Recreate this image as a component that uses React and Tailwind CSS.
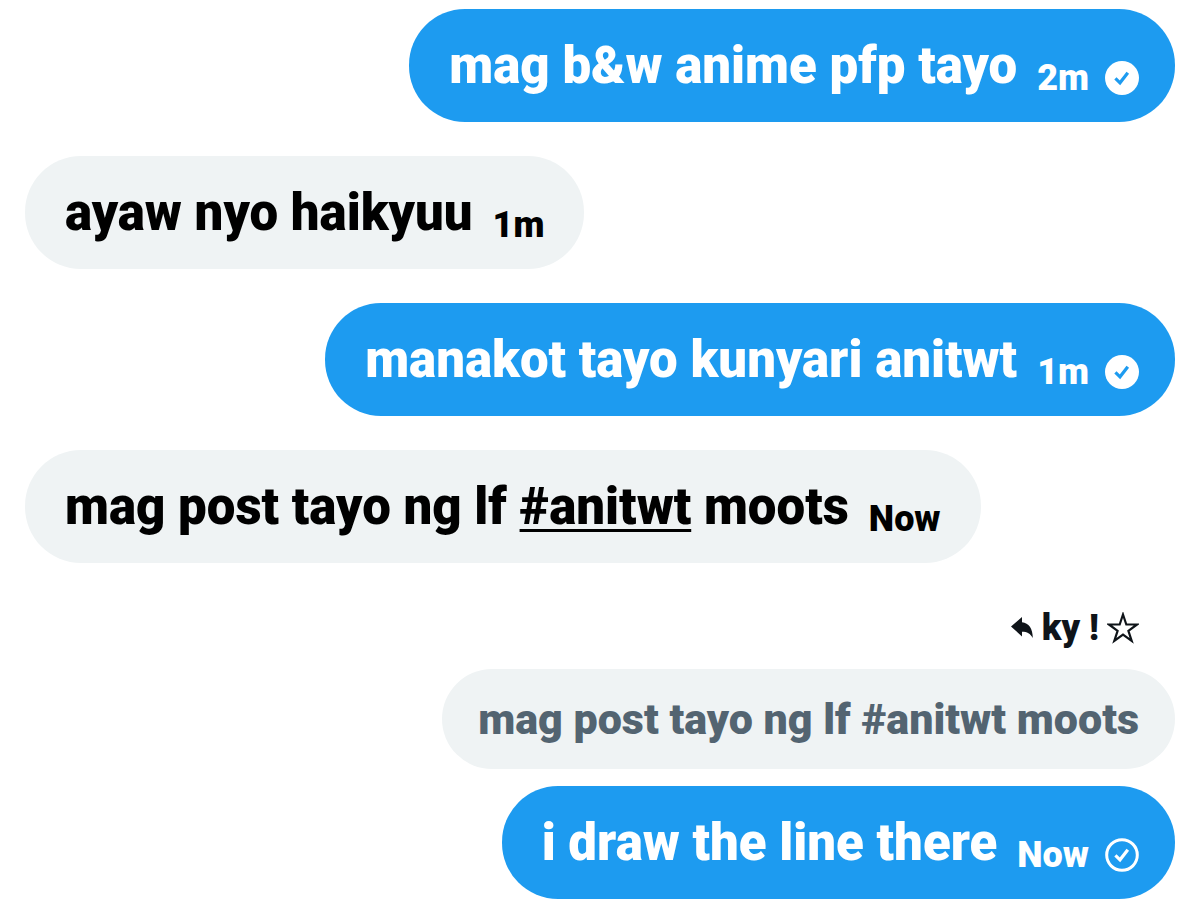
const messages = [
  { id: 1, mine: true, text: 'mag b&w anime pfp tayo', time: '2m', status: 'read' },
  { id: 2, mine: false, text: 'ayaw nyo haikyuu', time: '1m' },
  { id: 3, mine: true, text: 'manakot tayo kunyari anitwt', time: '1m', status: 'read' },
  { id: 4, mine: false, text: 'mag post tayo ng lf #anitwt moots', time: 'Now' },
  {
    id: 5,
    mine: true,
    text: 'i draw the line there',
    time: 'Now',
    status: 'sent',
    reply: { author: 'ky !', text: 'mag post tayo ng lf #anitwt moots' },
  },
];

function StatusIcon({ status }) {
  const read = status === 'read';
  return (
    <svg viewBox="0 0 34 34" className="size-[34px] shrink-0" fill="none" role="img" aria-label={status}>
      {read ? (
        <circle cx="17" cy="17" r="17" fill="white" />
      ) : (
        <circle cx="17" cy="17" r="15.3" stroke="white" strokeWidth="3" />
      )}
      <path d="M10.4 17.4l4.6 4.4 7.8-10" stroke={read ? '#1d9bf0' : 'white'} strokeWidth="3.2" />
    </svg>
  );
}

// turns #hashtags into links
function MessageText({ text }) {
  return text.split(/(#\w+)/).map((part, i) =>
    part.startsWith('#') ? (
      <a key={i} href={'#' + part.slice(1)} className="underline decoration-3 underline-offset-5 [text-decoration-skip-ink:none]">
        {part}
      </a>
    ) : (
      part
    )
  );
}

function ReplyPreview({ author, text }) {
  return (
    <>
      <div className="flex items-center gap-2 pr-9 pt-1.5 mb-4 text-[#0f1419]">
        <svg viewBox="0 0 24 24" className="w-6 h-6" fill="currentColor" aria-hidden="true">
          <path d="M1 10.5L12 1v5.2c6.8.6 10.8 6.3 10.8 15.8-2.4-4.4-5.6-6.3-10.8-6.3v4.8z" />
        </svg>
        <span className="text-[36px] leading-[50px]">{author}</span>
        <svg viewBox="0 0 32 32" className="w-8 h-8" fill="none" stroke="currentColor" strokeWidth="2.2" aria-hidden="true">
          <path d="M16 2.5l3.3 10h10.7l-8.6 6.3 3.3 10.2-8.7-6.3-8.7 6.3 3.3-10.2-8.6-6.3h10.7z" />
        </svg>
      </div>
      <div className="rounded-[50px] bg-[#eff3f4] px-9 py-5 mb-[17px] text-[#536471] text-[43px] leading-[60px]">
        {text}
      </div>
    </>
  );
}

function Message({ mine, text, time, status, reply }) {
  return (
    <li className={mine ? 'flex flex-col items-end' : 'flex flex-col items-start'}>
      {reply && <ReplyPreview {...reply} />}
      <div
        className={
          'flex items-end rounded-[56px] pt-[25px] pb-6 pl-10 ' +
          (mine ? 'bg-[#1d9bf0] text-white pr-9' : 'bg-[#eff3f4] text-black pr-10')
        }
      >
        <p className="text-[51px] leading-[64px]">
          <MessageText text={text} />
        </p>
        <time className="ml-5 text-[36px] leading-10">{time}</time>
        {status && (
          <span className="ml-4 flex h-10 items-center">
            <StatusIcon status={status} />
          </span>
        )}
      </div>
    </li>
  );
}

export default function App() {
  return (
    <main className="min-h-screen bg-white px-[25px] pt-[9px] pb-4 font-['Roboto','Noto_Sans',sans-serif] font-black">
      <ul className="flex flex-col gap-[34px]">
        {messages.map((m) => (
          <Message key={m.id} {...m} />
        ))}
      </ul>
    </main>
  );
}
